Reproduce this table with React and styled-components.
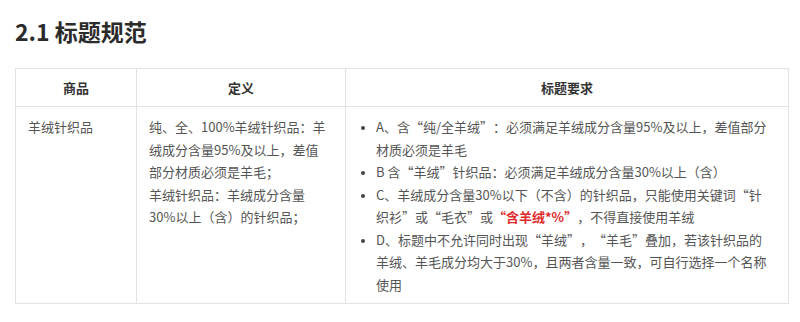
import React from "react"
import styled, { createGlobalStyle } from "styled-components"

const GlobalStyle = createGlobalStyle`
  html, body {
    margin: 0;
    padding: 0;
    background: #fff;
  }
  body {
    font-family: "Noto Sans CJK SC", "Noto Sans", sans-serif;
    text-spacing-trim: space-all;
  }
`

const Page = styled.div`
  width: 800px;
  height: 322px;
  padding: 15px 15px 0 15px;
  box-sizing: border-box;
  background: #fff;
  overflow: hidden;
`

const Heading = styled.h2`
  margin: 0 0 21px 0;
  font-family: "Noto Sans CJK SC", sans-serif;
  font-weight: bold;
  font-size: 23px;
  line-height: 32px;
  color: #2b2b2b;
`

const Table = styled.table`
  width: 770px;
  border-collapse: collapse;
  table-layout: fixed;
  font-family: "Noto Sans CJK SC", sans-serif;
  font-size: 13px;
  color: #555;
  text-spacing-trim: space-all;
`

const HeadCell = styled.th`
  width: ${props => props.w}px;
  height: 37px;
  padding: 0;
  border: 1px solid #e3e3e3;
  font-weight: bold;
  font-size: 13px;
  color: #333;
  text-align: center;
  vertical-align: middle;
`

const Cell = styled.td`
  padding: 9px 16px 7px 12px;
  border: 1px solid #e3e3e3;
  vertical-align: top;
  line-height: 22.5px;
  overflow-wrap: anywhere;
`

const List = styled.ul`
  margin: 0;
  padding: 0 0 0 18px;
  list-style: none;
`

const Item = styled.li`
  position: relative;
  &::before {
    content: "";
    position: absolute;
    left: -15px;
    top: 10px;
    width: 4px;
    height: 4px;
    border-radius: 50%;
    background: #444;
  }
`

const Red = styled.span`
  color: #e02a2a;
  font-weight: bold;
`

const App = () => (
  <Page>
    <GlobalStyle />
    <Heading>2.1 标题规范</Heading>
    <Table>
      <thead>
        <tr>
          <HeadCell w={120}>商品</HeadCell>
          <HeadCell w={208}>定义</HeadCell>
          <HeadCell w={442}>标题要求</HeadCell>
        </tr>
      </thead>
      <tbody>
        <tr>
          <Cell>羊绒针织品</Cell>
          <Cell>
            纯、全、100%羊绒针织品：羊绒成分含量95%及以上，差值部分材质必须是羊毛；
            <br />
            羊绒针织品：羊绒成分含量30%以上（含）的针织品；
          </Cell>
          <Cell>
            <List>
              <Item>A、含“纯/全羊绒”：必须满足羊绒成分含量95%及以上，差值部分材质必须是羊毛</Item>
              <Item>B 含“羊绒”针织品：必须满足羊绒成分含量30%以上（含）</Item>
              <Item>
                C、羊绒成分含量30%以下（不含）的针织品，只能使用关键词“针织衫”或“毛衣”或<Red>“含羊绒*%”</Red>，不得直接使用羊绒
              </Item>
              <Item>D、标题中不允许同时出现“羊绒”，“羊毛”叠加，若该针织品的羊绒、羊毛成分均大于30%，且两者含量一致，可自行选择一个名称使用</Item>
            </List>
          </Cell>
        </tr>
      </tbody>
    </Table>
  </Page>
)

export default App
